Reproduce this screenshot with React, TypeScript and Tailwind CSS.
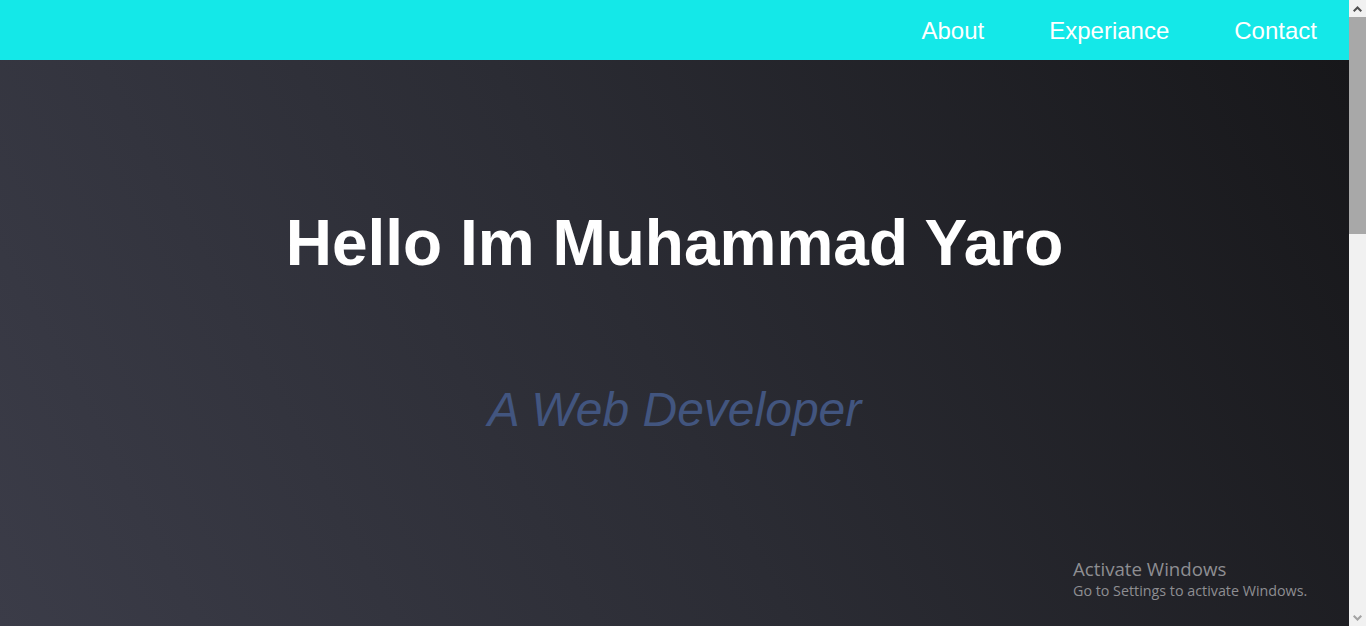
export default function App() {
  const links = ['About', 'Experiance', 'Contact']

  return (
    <div className="relative flex h-[626px] overflow-hidden bg-[#1c1c21] font-['Liberation_Sans',Arial,sans-serif]">
      <div className="flex min-w-0 flex-1 flex-col">
        {/* Top navigation */}
        <nav className="flex h-[60px] shrink-0 items-center justify-end gap-[65px] bg-[#14e8e8] pr-[32px] pt-[2px]">
          {links.map((link) => (
            <a key={link} href={`#${link.toLowerCase()}`} className="text-[24px] leading-none text-white">
              {link}
            </a>
          ))}
        </nav>

        {/* Hero */}
        <section className="flex flex-1 flex-col items-center bg-[linear-gradient(62deg,#3b3c48_0%,#2b2c34_48%,#17171a_100%)] pt-[151px]">
          <h1 className="text-[64px] font-bold leading-none text-white">Hello Im Muhammad Yaro</h1>
          <h2 className="mt-[111px] text-[48px] italic leading-none text-[#42557f]">A Web Developer</h2>
        </section>
      </div>

      {/* Browser scrollbar */}
      <div className="flex w-[17px] shrink-0 flex-col bg-[#f1f1f1]">
        <div className="flex h-[17px] items-center justify-center">
          <svg width="9" height="6" viewBox="0 0 9 6" fill="#505050">
            <path d="M4.5 0 L9 4.5 L7.6 6 L4.5 2.9 L1.4 6 L0 4.5 Z" />
          </svg>
        </div>
        <div className="h-[217px] bg-[#a8a8a8]" />
        <div className="flex-1" />
        <div className="flex h-[17px] items-center justify-center">
          <svg width="9" height="6" viewBox="0 0 9 6" fill="#a3a3a3">
            <path d="M4.5 6 L9 1.5 L7.6 0 L4.5 3.1 L1.4 0 L0 1.5 Z" />
          </svg>
        </div>
      </div>

      {/* Windows watermark */}
      <div className="absolute left-[1073px] top-[557px] font-['Open_Sans','Noto_Sans',sans-serif] text-[#8e8e92]">
        <p className="text-[18.7px] leading-[24px]">Activate Windows</p>
        <p className="text-[14.3px] leading-[20px]">Go to Settings to activate Windows.</p>
      </div>
    </div>
  )
}
